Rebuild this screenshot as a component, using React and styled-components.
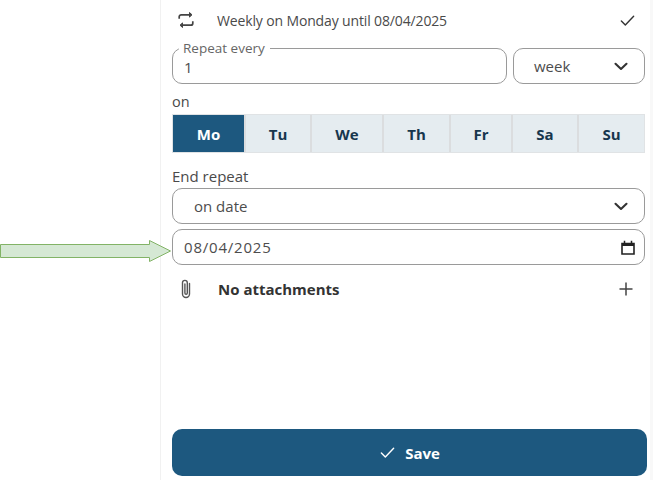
import React from "react";
import styled, { createGlobalStyle } from "styled-components";

const Global = createGlobalStyle`
  html, body { margin: 0; padding: 0; background: #fff; }
  body { font-family: "Open Sans", "Noto Sans", sans-serif; color: #3d3d3d; }
  * { box-sizing: border-box; }
`;
const Page = styled.div`
  position: relative;
  width: 653px;
  height: 480px;
  overflow: hidden;
  display: flex;
  background: #fff;
`;
const Gutter = styled.div`
  width: 160px;
  flex: none;
`;
const Panel = styled.div`
  width: 490px;
  flex: none;
  height: 480px;
  border-left: 1px solid #f1f1f1;
  display: flex;
  flex-direction: column;
  padding: 0 3px 4px 11px;
`;
const RightEdge = styled.div`
  flex: 1;
  background: #f8f8f8;
`;
const SummaryRow = styled.div`
  height: 40px;
  display: flex;
  align-items: center;
  padding: 0 11px 0 5px;
  font-size: 14px;
  color: #4a4a4a;
`;
const SummaryText = styled.span`
  margin-left: 22px;
  flex: 1;
  letter-spacing: -0.14px;
`;
const FieldRow = styled.div`
  margin-top: 8px;
  width: 473px;
  display: flex;
  gap: 6px;
`;
const Box = styled.div`
  position: relative;
  height: 36px;
  border: 1px solid #9a9a9a;
  border-radius: 10px;
  background: #fff;
  display: flex;
  align-items: center;
  font-size: 15px;
  color: #4d4d4d;
  width: ${p => p.$width || "473px"};
  margin-top: ${p => p.$top || 0}px;
  padding: ${p => p.$pad || "0 11px"};
`;
const Legend = styled.span`
  position: absolute;
  top: -8px;
  left: 6px;
  padding: 0 5px 0 4px;
  background: #fff;
  font-size: 13.5px;
  line-height: 14px;
  color: #666;
`;
const Value = styled.span`
  flex: 1;
  padding-top: ${p => p.$drop || 0}px;
  letter-spacing: ${p => p.$track || 0}px;
`;
const Label = styled.div`
  font-size: ${p => p.$size || 14.5}px;
  line-height: 20px;
  color: #4a4a4a;
  margin-top: ${p => p.$top}px;
`;
const Days = styled.div`
  margin-top: 2px;
  width: 473px;
  height: 39px;
  display: grid;
  grid-template-columns: 73px 66px 72px 67px 62px 66px 1fr;
  background: #e5ecf0;
  border: 1px solid #e0e3e5;
`;
const Day = styled.div`
  display: flex;
  align-items: center;
  justify-content: center;
  font-size: 15px;
  font-weight: 700;
  color: ${p => (p.$active ? "#fff" : "#17364d")};
  background: ${p => (p.$active ? "#1d587f" : "#e5ecf0")};
  border-right: ${p => (p.$last ? 0 : "2px solid #dbdddf")};
`;
const AttachRow = styled.div`
  height: 47px;
  width: 473px;
  display: flex;
  align-items: center;
  padding: 0 12px 0 7px;
  font-size: 15px;
  font-weight: 700;
  color: #333;
`;
const AttachText = styled.span`
  margin-left: 25px;
  flex: 1;
`;
const SaveButton = styled.div`
  margin-top: auto;
  width: 475px;
  height: 47px;
  border-radius: 10px;
  background: #1d587f;
  color: #fff;
  font-size: 15px;
  font-weight: 700;
  display: flex;
  align-items: center;
  justify-content: center;
  gap: 9px;
`;
const Arrow = styled.svg`
  position: absolute;
  left: 0;
  top: 239px;
`;
const Chevron = () => (
  <svg width="14" height="9" viewBox="0 0 14 9" fill="none" stroke="#333" strokeWidth="2.1" strokeLinecap="round" strokeLinejoin="round">
    <path d="M1.5 1.8L7 7l5.5-5.2" />
  </svg>
);
const Check = ({ color = "#333", size = 17 }) => (
  <svg width={size} height={size} viewBox="0 0 18 18" fill="none" stroke={color} strokeWidth="1.5" strokeLinecap="round" strokeLinejoin="round">
    <path d="M2.5 9.5l4.2 4.2L15.5 4.5" />
  </svg>
);
const days = ["Mo", "Tu", "We", "Th", "Fr", "Sa", "Su"];

export default function App() {
  return (
    <Page>
      <Global />
      <Gutter />
      <Panel>
        <SummaryRow>
          <svg width="18" height="18" viewBox="0 0 18 18" fill="none" stroke="#444" strokeWidth="1.7">
            <path d="M12.5 1.5L15 3.8 12.5 6.1z" strokeWidth="1" fill="#444" />
            <path d="M13 3.8H4.2A2 2 0 0 0 2.2 5.8v2" />
            <path d="M5.5 11.9L3 14.2 5.5 16.5z" strokeWidth="1" fill="#444" />
            <path d="M5 14.2h8.8A2 2 0 0 0 15.8 12.2v-2" />
          </svg>
          <SummaryText>Weekly on Monday until 08/04/2025</SummaryText>
          <Check />
        </SummaryRow>
        <FieldRow>
          <Box $width="335px">
            <Legend>Repeat every</Legend>
            <Value $drop={1}>1</Value>
          </Box>
          <Box $width="132px" $pad="0 16px 0 20px">
            <Value>week</Value>
            <Chevron />
          </Box>
        </FieldRow>
        <Label $top={8}>on</Label>
        <Days>
          {days.map((d, i) => (
            <Day key={d} $active={i === 0} $last={i === 6}>{d}</Day>
          ))}
        </Days>
        <Label $top={13} $size={15}>End repeat</Label>
        <Box $top={2} $pad="0 16px 0 21px">
          <Value>on date</Value>
          <Chevron />
        </Box>
        <Box $top={5} $pad="0 9px 0 11px">
          <Value $track={0.8}>08/04/2025</Value>
          <svg width="14" height="15" viewBox="0 0 14 15" fill="none">
            <path d="M1 3.5h12v10.5H1z" stroke="#222" strokeWidth="1.6" />
            <path d="M1 3h12v3H1z" fill="#222" />
            <path d="M3.5 .8v2.5M10.5 .8v2.5" stroke="#222" strokeWidth="1.5" />
          </svg>
        </Box>
        <AttachRow>
          <svg width="14" height="22" viewBox="0 0 14 22" fill="none" stroke="#555" strokeWidth="1.4" strokeLinecap="round">
            <path d="M10.5 5.5v10.5a3.5 3.5 0 0 1-7 0V4.8a2.4 2.4 0 0 1 4.8 0V15a1.1 1.1 0 0 1-2.4 0V6" />
          </svg>
          <AttachText>No attachments</AttachText>
          <svg width="14" height="14" viewBox="0 0 14 14" stroke="#444" strokeWidth="1.5">
            <path d="M7 .5v13M.5 7h13" />
          </svg>
        </AttachRow>
        <SaveButton>
          <Check color="#fff" size={17} />
          Save
        </SaveButton>
      </Panel>
      <RightEdge />
      <Arrow width="173" height="24" viewBox="0 0 173 24">
        <path d="M0.5 5.5H149.5V1.5L170.5 12L149.5 22.5V18.5H0.5Z" fill="#d5e8d4" stroke="#82b366" />
      </Arrow>
    </Page>
  );
}
